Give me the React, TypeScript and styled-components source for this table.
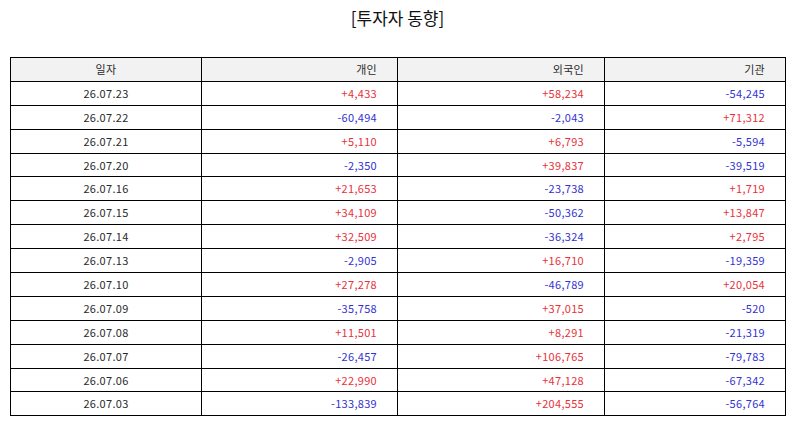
import React from "react";
import styled, { createGlobalStyle } from "styled-components";

const GlobalStyle = createGlobalStyle`
  html, body { margin: 0; padding: 0; background: #ffffff; }
  body { font-family: "Noto Sans CJK KR", "Noto Sans", sans-serif; color: #222; }
`;

const Page = styled.div`
  width: 794px;
  height: 425px;
  box-sizing: border-box;
  padding: 0 9px 0 10px;
  display: flex;
  flex-direction: column;
  align-items: stretch;
`;

const Title = styled.h1`
  margin: 0;
  height: 38px;
  padding-top: 5px;
  box-sizing: border-box;
  text-align: center;
  font-size: 17px;
  font-weight: 400;
  line-height: 26px;
  color: #111;
  margin-bottom: 19px;
`;

const Table = styled.table`
  width: 775px;
  border-collapse: collapse;
  table-layout: fixed;
  font-size: 11px;
  letter-spacing: 0.3px;
`;

const HeadCell = styled.th<{ $align: "center" | "right" }>`
  height: 22.9px;
  padding: ${(p) => (p.$align === "center" ? "0" : "0 20px 0 0")};
  border: 1px solid #000;
  background: #f2f2f2;
  font-weight: 400;
  color: #2a2a2a;
  text-align: ${(p) => p.$align};
  line-height: 1;
`;

const Cell = styled.td<{ $align: "center" | "right"; $tone?: "up" | "down" }>`
  height: 22.9px;
  padding: ${(p) => (p.$align === "center" ? "0" : "0 20px 0 0")};
  border: 1px solid #000;
  text-align: ${(p) => p.$align};
  line-height: 1;
  color: ${(p) => (p.$tone === "up" ? "#e8313a" : p.$tone === "down" ? "#3232d2" : "#2a2a2a")};
`;

const rows: [string, string, string, string][] = [
  ["26.07.23", "+4,433", "+58,234", "-54,245"],
  ["26.07.22", "-60,494", "-2,043", "+71,312"],
  ["26.07.21", "+5,110", "+6,793", "-5,594"],
  ["26.07.20", "-2,350", "+39,837", "-39,519"],
  ["26.07.16", "+21,653", "-23,738", "+1,719"],
  ["26.07.15", "+34,109", "-50,362", "+13,847"],
  ["26.07.14", "+32,509", "-36,324", "+2,795"],
  ["26.07.13", "-2,905", "+16,710", "-19,359"],
  ["26.07.10", "+27,278", "-46,789", "+20,054"],
  ["26.07.09", "-35,758", "+37,015", "-520"],
  ["26.07.08", "+11,501", "+8,291", "-21,319"],
  ["26.07.07", "-26,457", "+106,765", "-79,783"],
  ["26.07.06", "+22,990", "+47,128", "-67,342"],
  ["26.07.03", "-133,839", "+204,555", "-56,764"],
];

const tone = (v: string) => (v.startsWith("-") ? "down" : "up");

export default function App() {
  return (
    <>
      <GlobalStyle />
      <Page>
        <Title>[투자자 동향]</Title>
        <Table>
          <colgroup>
            <col style={{ width: 191 }} />
            <col style={{ width: 196 }} />
            <col style={{ width: 207 }} />
            <col style={{ width: 181 }} />
          </colgroup>
          <thead>
            <tr>
              <HeadCell $align="center">일자</HeadCell>
              <HeadCell $align="right">개인</HeadCell>
              <HeadCell $align="right">외국인</HeadCell>
              <HeadCell $align="right">기관</HeadCell>
            </tr>
          </thead>
          <tbody>
            {rows.map((r) => (
              <tr key={r[0]}>
                <Cell $align="center">{r[0]}</Cell>
                <Cell $align="right" $tone={tone(r[1])}>{r[1]}</Cell>
                <Cell $align="right" $tone={tone(r[2])}>{r[2]}</Cell>
                <Cell $align="right" $tone={tone(r[3])}>{r[3]}</Cell>
              </tr>
            ))}
          </tbody>
        </Table>
      </Page>
    </>
  );
}
